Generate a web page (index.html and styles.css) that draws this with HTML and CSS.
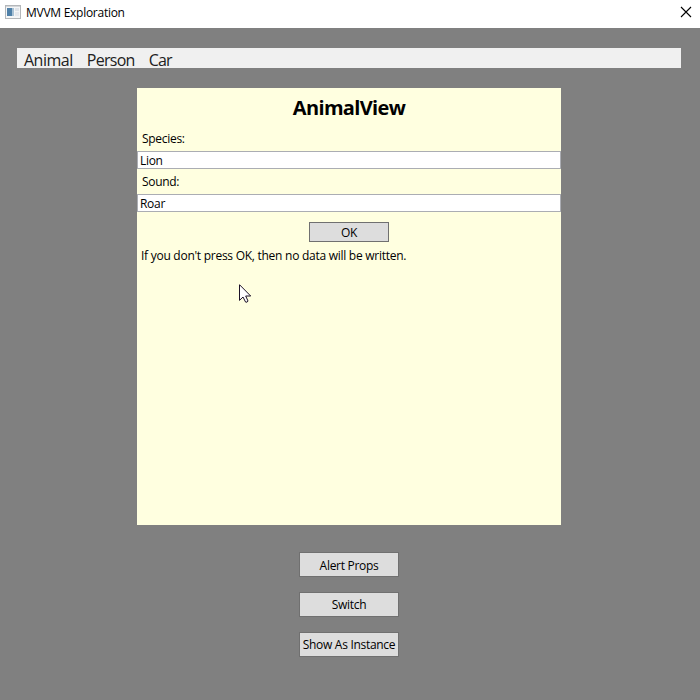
FILE: index.html
```
<!DOCTYPE html>
<html lang="en">
<head>
<meta charset="utf-8">
<title>MVVM Exploration</title>
<link rel="stylesheet" href="styles.css">
</head>
<body>
<header class="titlebar">
  <svg class="app-icon" width="16" height="14" viewBox="0 0 16 14">
    <rect x="0.5" y="0.5" width="15" height="13" fill="#f4f5f6" stroke="#b4b7ba"/>
    <path d="M1 1.5h14" stroke="#d3d6d9"/>
    <rect x="2" y="3" width="5" height="8" fill="#4f80a8"/>
    <path d="M7 3h2v8H7z" fill="#a9c2d5"/>
    <rect x="10" y="3" width="4" height="3" fill="#dde2e8"/>
    <rect x="10" y="7" width="4" height="4" fill="#e5e8ed"/>
  </svg>
  <span class="window-title">MVVM Exploration</span>
  <svg class="close" width="10" height="10" viewBox="0 0 10 10"><path d="M0 0L10 10M10 0L0 10" stroke="#000" stroke-width="1.1"/></svg>
</header>
<main class="window">
  <nav class="menu"><span class="animal">Animal</span><span class="person">Person</span><span class="car">Car</span></nav>
  <section class="panel">
    <h1>AnimalView</h1>
    <label class="species" for="species">Species:</label>
    <input id="species" type="text" value="Lion">
    <label class="sound" for="sound">Sound:</label>
    <input id="sound" type="text" value="Roar">
    <button class="ok">OK</button>
    <p class="hint">If you don't press OK, then no data will be written.</p>
    <svg class="cursor" width="13" height="20" viewBox="0 0 13 20"><path d="M.5.7V16.4L4 13l2.6 5.1q1.8.6 2.4-1.1L6.700 12h5z" fill="#fff" stroke="#1c1228"/></svg>
  </section>
  <div class="actions">
    <button class="alert">Alert Props</button>
    <button class="switch">Switch</button>
    <button class="show">Show As Instance</button>
  </div>
</main>
</body>
</html>
```
FILE: styles.css
```
* { box-sizing: border-box; }
body {
  margin: 0;
  width: 700px;
  height: 700px;
  overflow: hidden;
  display: flex;
  flex-direction: column;
  background: #808080;
  color: #000;
  font: 12px/16px "Open Sans", "Noto Sans", sans-serif;
  letter-spacing: -0.3px;
}
.titlebar {
  height: 28px;
  flex: none;
  display: flex;
  align-items: center;
  padding: 0 9px 4px 5px;
  background: #fff;
}
.window-title { margin: 1px 0 0 5px; letter-spacing: -0.27px; }
.close { margin-left: auto; overflow: visible; }
.window {
  flex: 1;
  display: flex;
  flex-direction: column;
  align-items: center;
  padding: 20px 19px 0 17px;
}
.menu {
  align-self: stretch;
  height: 20px;
  padding-left: 7px;
  display: flex;
  gap: 14px;
  background: #f0f0f0;
  color: #212121;
  font-size: 16px;
  line-height: 25px;
  letter-spacing: -0.5px;
}
.person { letter-spacing: -0.7px; }
.car { letter-spacing: -0.8px; }
.panel {
  position: relative;
  width: 424px;
  height: 437px;
  margin-top: 20px;
  display: flex;
  flex-direction: column;
  background: #ffffe0;
}
h1 {
  margin: 6px 0 10px;
  font-size: 20px;
  line-height: 27px;
  font-weight: 700;
  letter-spacing: -0.65px;
  text-align: center;
}
label { height: 20px; padding-left: 5px; }
.sound { height: 25px; padding-top: 5px; }
input {
  width: 100%;
  height: 18px;
  padding: 1px 2px 0;
  border: 1px solid #abadb3;
  border-radius: 0;
  background: #fff;
  color: #000;
  font: inherit;
  letter-spacing: inherit;
  outline: none;
}
button {
  padding: 0;
  border: 1px solid #707070;
  border-radius: 0;
  background: #ddd;
  color: #000;
  font: inherit;
  letter-spacing: inherit;
  white-space: nowrap;
}
.ok { width: 80px; height: 20px; margin: 10px 0 0 172px; padding-top: 2px; }
.hint { margin: 6px 0 0 4px; white-space: nowrap; letter-spacing: -0.265px; }
.cursor { position: absolute; left: 102px; top: 196px; }
.actions {
  display: flex;
  flex-direction: column;
  gap: 15px;
  margin-top: 27px;
}
.actions button { width: 100px; height: 25px; padding-top: 2px; }
.actions .switch, .actions .show { padding-top: 0; }
```
